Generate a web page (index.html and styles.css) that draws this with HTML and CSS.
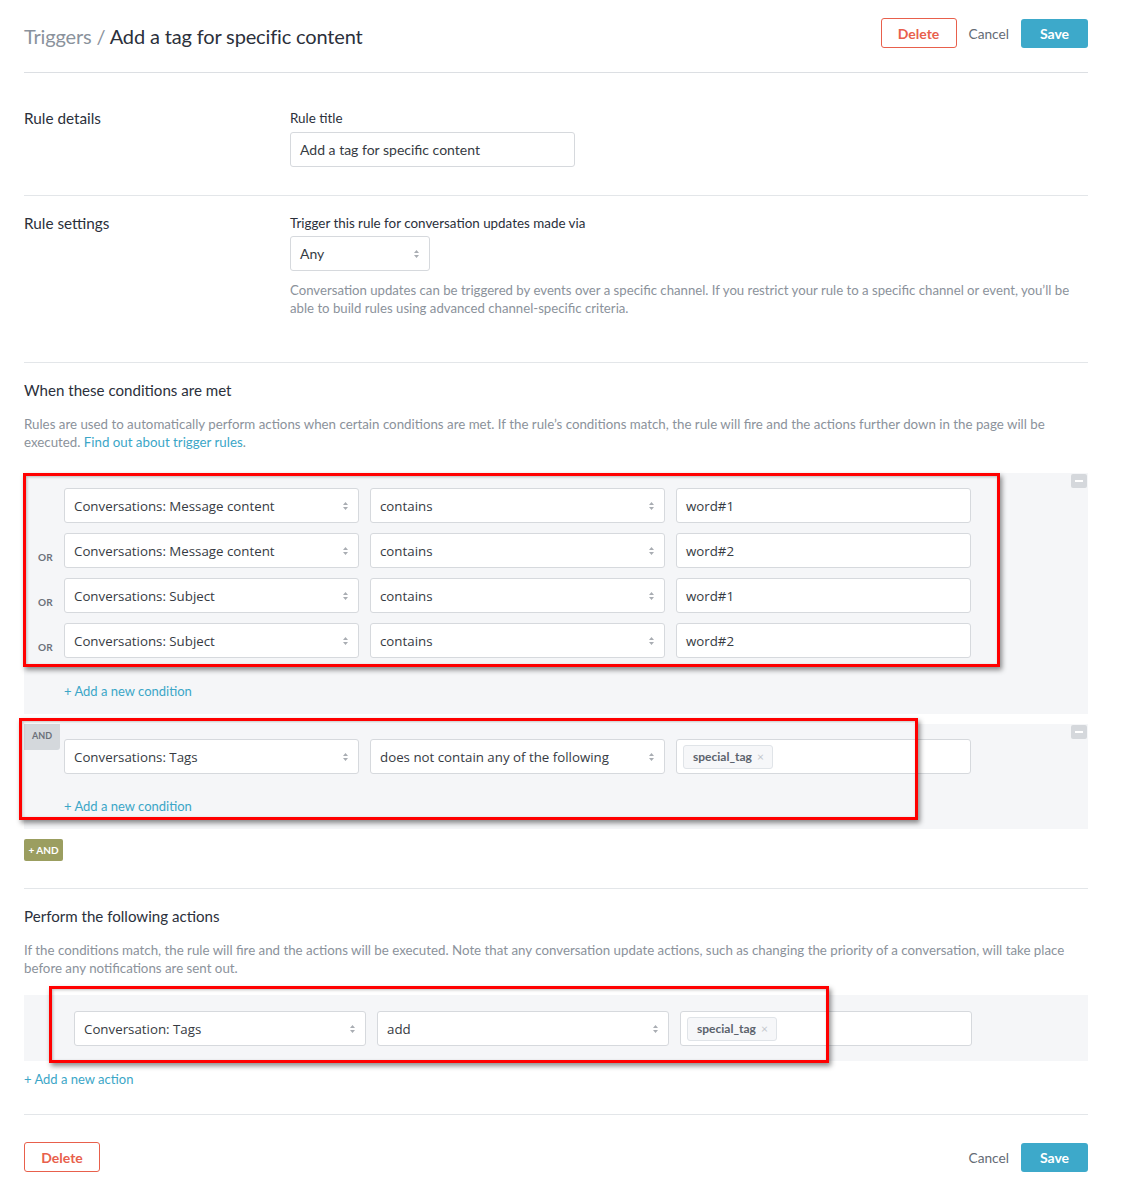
FILE: index.html
```html
<!DOCTYPE html>
<html>
<head>
<meta charset="utf-8">
<link rel="stylesheet" href="styles.css">
</head>
<body>
<div class="page">
  <header class="topbar">
    <h1 class="title"><span class="crumb">Triggers /</span> Add a tag for specific content</h1>
    <div class="btns">
      <button class="btn btn-delete">Delete</button>
      <span class="cancel">Cancel</span>
      <button class="btn btn-save">Save</button>
    </div>
  </header>

  <section class="split first">
    <div class="sec-label">Rule details</div>
    <div class="sec-body">
      <div class="field-label">Rule title</div>
      <div class="box text-input title-input">Add a tag for specific content</div>
    </div>
  </section>

  <section class="split second">
    <div class="sec-label">Rule settings</div>
    <div class="sec-body">
      <div class="field-label">Trigger this rule for conversation updates made via</div>
      <div class="box select any-select"><span>Any</span><svg class="arr" width="5" height="8" viewBox="0 0 5 8"><path d="M2.5 0 5 3H0zM2.5 8 0 5h5z" fill="#a9adb3"/></svg></div>
      <p class="help">Conversation updates can be triggered by events over a specific channel. If you restrict your rule to a specific channel or event, you’ll be<br>able to build rules using advanced channel-specific criteria.</p>
    </div>
  </section>

  <section class="block">
    <h2 class="block-title">When these conditions are met</h2>
    <p class="desc">Rules are used to automatically perform actions when certain conditions are met. If the rule’s conditions match, the rule will fire and the actions further down in the page will be<br>executed. <a class="link">Find out about trigger rules</a>.</p>

    <div class="group g1">
      <span class="minus"></span>
      <div class="cond">
        <div class="op"></div>
        <div class="box select sel1"><span>Conversations: Message content</span><svg class="arr" width="5" height="8" viewBox="0 0 5 8"><path d="M2.5 0 5 3H0zM2.5 8 0 5h5z" fill="#a9adb3"/></svg></div>
        <div class="box select sel2"><span>contains</span><svg class="arr" width="5" height="8" viewBox="0 0 5 8"><path d="M2.5 0 5 3H0zM2.5 8 0 5h5z" fill="#a9adb3"/></svg></div>
        <div class="box text-input val">word#1</div>
      </div>
      <div class="cond">
        <div class="op">OR</div>
        <div class="box select sel1"><span>Conversations: Message content</span><svg class="arr" width="5" height="8" viewBox="0 0 5 8"><path d="M2.5 0 5 3H0zM2.5 8 0 5h5z" fill="#a9adb3"/></svg></div>
        <div class="box select sel2"><span>contains</span><svg class="arr" width="5" height="8" viewBox="0 0 5 8"><path d="M2.5 0 5 3H0zM2.5 8 0 5h5z" fill="#a9adb3"/></svg></div>
        <div class="box text-input val">word#2</div>
      </div>
      <div class="cond">
        <div class="op">OR</div>
        <div class="box select sel1"><span>Conversations: Subject</span><svg class="arr" width="5" height="8" viewBox="0 0 5 8"><path d="M2.5 0 5 3H0zM2.5 8 0 5h5z" fill="#a9adb3"/></svg></div>
        <div class="box select sel2"><span>contains</span><svg class="arr" width="5" height="8" viewBox="0 0 5 8"><path d="M2.5 0 5 3H0zM2.5 8 0 5h5z" fill="#a9adb3"/></svg></div>
        <div class="box text-input val">word#1</div>
      </div>
      <div class="cond">
        <div class="op">OR</div>
        <div class="box select sel1"><span>Conversations: Subject</span><svg class="arr" width="5" height="8" viewBox="0 0 5 8"><path d="M2.5 0 5 3H0zM2.5 8 0 5h5z" fill="#a9adb3"/></svg></div>
        <div class="box select sel2"><span>contains</span><svg class="arr" width="5" height="8" viewBox="0 0 5 8"><path d="M2.5 0 5 3H0zM2.5 8 0 5h5z" fill="#a9adb3"/></svg></div>
        <div class="box text-input val">word#2</div>
      </div>
      <a class="link add-cond">+ Add a new condition</a>
      <div class="mark mark1"></div>
    </div>

    <div class="group g2">
      <span class="and-tag">AND</span>
      <span class="minus"></span>
      <div class="cond">
        <div class="op"></div>
        <div class="box select sel1"><span>Conversations: Tags</span><svg class="arr" width="5" height="8" viewBox="0 0 5 8"><path d="M2.5 0 5 3H0zM2.5 8 0 5h5z" fill="#a9adb3"/></svg></div>
        <div class="box select sel2"><span>does not contain any of the following</span><svg class="arr" width="5" height="8" viewBox="0 0 5 8"><path d="M2.5 0 5 3H0zM2.5 8 0 5h5z" fill="#a9adb3"/></svg></div>
        <div class="box tag-input val"><span class="chip">special_tag <span class="x">×</span></span></div>
      </div>
      <a class="link add-cond">+ Add a new condition</a>
      <div class="mark mark2"></div>
    </div>

    <button class="plus-and">+ AND</button>
  </section>

  <section class="block actions-sec">
    <h2 class="block-title">Perform the following actions</h2>
    <p class="desc">If the conditions match, the rule will fire and the actions will be executed. Note that any conversation update actions, such as changing the priority of a conversation, will take place<br>before any notifications are sent out.</p>
    <div class="action-box">
      <div class="action-row">
        <div class="box select asel"><span>Conversation: Tags</span><svg class="arr" width="5" height="8" viewBox="0 0 5 8"><path d="M2.5 0 5 3H0zM2.5 8 0 5h5z" fill="#a9adb3"/></svg></div>
        <div class="box select asel"><span>add</span><svg class="arr" width="5" height="8" viewBox="0 0 5 8"><path d="M2.5 0 5 3H0zM2.5 8 0 5h5z" fill="#a9adb3"/></svg></div>
        <div class="box tag-input asel"><span class="chip">special_tag <span class="x">×</span></span></div>
      </div>
      <div class="mark mark3"></div>
    </div>
    <a class="link add-action">+ Add a new action</a>
  </section>

  <footer class="footer">
    <button class="btn btn-delete">Delete</button>
    <div class="btns">
      <span class="cancel">Cancel</span>
      <button class="btn btn-save">Save</button>
    </div>
  </footer>
</div>
</body>
</html>
```

FILE: styles.css
```css
* { box-sizing: border-box; }
body {
  margin: 0;
  background: #fff;
  font-family: Lato, "Liberation Sans", sans-serif;
  color: #2e3440;
}
.page {
  width: 1064px;
  margin-left: 24px;
}
.topbar {
  display: flex;
  justify-content: space-between;
  align-items: center;
  padding: 18px 0 24px;
  border-bottom: 1px solid #dcdfe3;
}
.title {
  margin: 0;
  font-size: 20px;
  letter-spacing: -0.15px;
  font-weight: 400;
  color: #2b303b;
  line-height: 30px;
  position: relative;
  top: 3px;
}
.crumb { color: #8a929c; }
.btns {
  display: flex;
  align-items: center;
  gap: 12px;
}
.btn {
  height: 30px;
  border-radius: 3px;
  font-family: Lato, "Liberation Sans", sans-serif;
  font-size: 14px;
  font-weight: 700;
  cursor: pointer;
}
.btn-delete {
  width: 76px;
  background: #fff;
  border: 1px solid #e8604c;
  color: #e8604c;
}
.btn-save {
  width: 67px;
  height: 29px;
  background: #3da9ca;
  border: none;
  color: #fff;
}
.cancel {
  font-size: 13.7px;
  color: #646b75;
}

.split {
  display: grid;
  grid-template-columns: 266px 1fr;
  border-bottom: 1px solid #e3e6e9;
}
.split.first { padding: 36px 0 28px; }
.split.second { padding: 18px 0 45px; }
.sec-label {
  font-size: 15.3px;
  line-height: 18px;
  color: #2b303b;
}
.field-label {
  font-size: 13.4px;
  line-height: 18px;
  color: #2b303b;
}
.box {
  height: 35px;
  background: #fff;
  border: 1px solid #d6d9dd;
  border-radius: 3px;
  display: flex;
  align-items: center;
  color: #363b43;
}
.text-input { padding: 0 9px; font-size: 14px; }
.title-input { width: 285px; margin-top: 5px; }
.select {
  justify-content: space-between;
  padding: 0 10px 0 9px;
  font-family: "Open Sans", "Noto Sans", sans-serif;
  font-size: 13.3px;
}
.any-select {
  width: 140px;
  margin-top: 4px;
  font-family: Lato, sans-serif;
  font-size: 14px;
}
.help {
  margin: 10px 0 0;
  font-size: 13.2px;
  line-height: 18px;
  color: #8b929b;
}

.block {
  padding: 17px 0 27px;
  border-bottom: 1px solid #e3e6e9;
}
.block-title {
  margin: 0;
  font-size: 15.1px;
  line-height: 20px;
  font-weight: 400;
  color: #2b303b;
}
.desc {
  margin: 15px 0 22px;
  font-size: 13.3px;
  line-height: 18px;
  color: #8b929b;
}
.link {
  color: #3ba6c7;
  text-decoration: none;
  cursor: pointer;
}
.group {
  position: relative;
  background: #f5f6f8;
  padding: 15px 0 14px;
}
.g2 { margin-top: 10px; }
.cond {
  display: flex;
  gap: 11px;
  align-items: flex-start;
}
.cond + .cond { margin-top: 10px; }
.op {
  width: 29px;
  flex: none;
  padding-top: 18px;
  text-align: right;
  font-size: 10px;
  font-weight: 700;
  color: #6c727b;
  letter-spacing: 0.2px;
}
.sel1 { width: 295px; }
.sel2 { width: 295px; }
.val { width: 295px; }
.val.text-input {
  font-family: "Open Sans", "Noto Sans", sans-serif;
  font-size: 13.3px;
}
.add-cond {
  display: block;
  margin: 24px 0 0 40px;
  font-size: 13px;
  line-height: 18px;
}
.g2 .add-cond { margin-top: 23px; }
.minus {
  position: absolute;
  top: 1px;
  right: 1px;
  width: 16px;
  height: 14px;
  background: #d5d8dc;
  border-radius: 2px;
}
.minus::after {
  content: "";
  position: absolute;
  left: 4px;
  right: 4px;
  top: 6px;
  height: 2px;
  background: #fff;
}
.and-tag {
  position: absolute;
  top: 0;
  left: 0;
  width: 36px;
  height: 26px;
  background: #d4d8dc;
  border-bottom-right-radius: 3px;
  font-size: 9px;
  font-weight: 700;
  color: #6b7079;
  text-align: center;
  line-height: 24px;
}
.tag-input { padding: 0 6px; }
.chip {
  display: inline-flex;
  align-items: center;
  height: 24px;
  padding: 0 8px 0 9px;
  background: #f6f7f9;
  border: 1px solid #e0e4e8;
  border-radius: 3px;
  font-size: 12px;
  font-weight: 700;
  color: #5c636d;
}
.chip .x {
  margin-left: 5px;
  font-weight: 400;
  color: #c3c7cc;
  font-size: 12px;
}
.plus-and {
  display: block;
  margin-top: 10px;
  width: 39px;
  height: 22px;
  padding: 0;
  border: none;
  border-radius: 2px;
  background: #9b9e60;
  color: #fff;
  font-family: Lato, sans-serif;
  font-size: 10px;
  font-weight: 700;
}
.actions-sec .desc { margin-bottom: 18px; }
.action-box {
  position: relative;
  background: #f5f6f8;
  padding: 16px 0 15px 50px;
}
.action-row {
  display: flex;
  gap: 11px;
}
.asel { width: 292px; }
.add-action {
  display: block;
  margin-top: 9px;
  font-size: 13px;
  line-height: 18px;
}
.actions-sec { padding-bottom: 26px; }
.footer {
  display: flex;
  justify-content: space-between;
  align-items: center;
  padding-top: 27px;
}

.mark {
  position: absolute;
  border: 3px solid #ff0000;
  box-shadow: 2px 3px 5px rgba(0, 0, 0, 0.45), inset 1px 1px 3px rgba(0,0,0,0.25);
  pointer-events: none;
}
.mark1 { left: -1px; top: 0; width: 977px; height: 194px; }
.mark2 { left: -5px; top: -6px; width: 899px; height: 102px; }
.mark3 { left: 25px; top: -9px; width: 780px; height: 77px; }
```
